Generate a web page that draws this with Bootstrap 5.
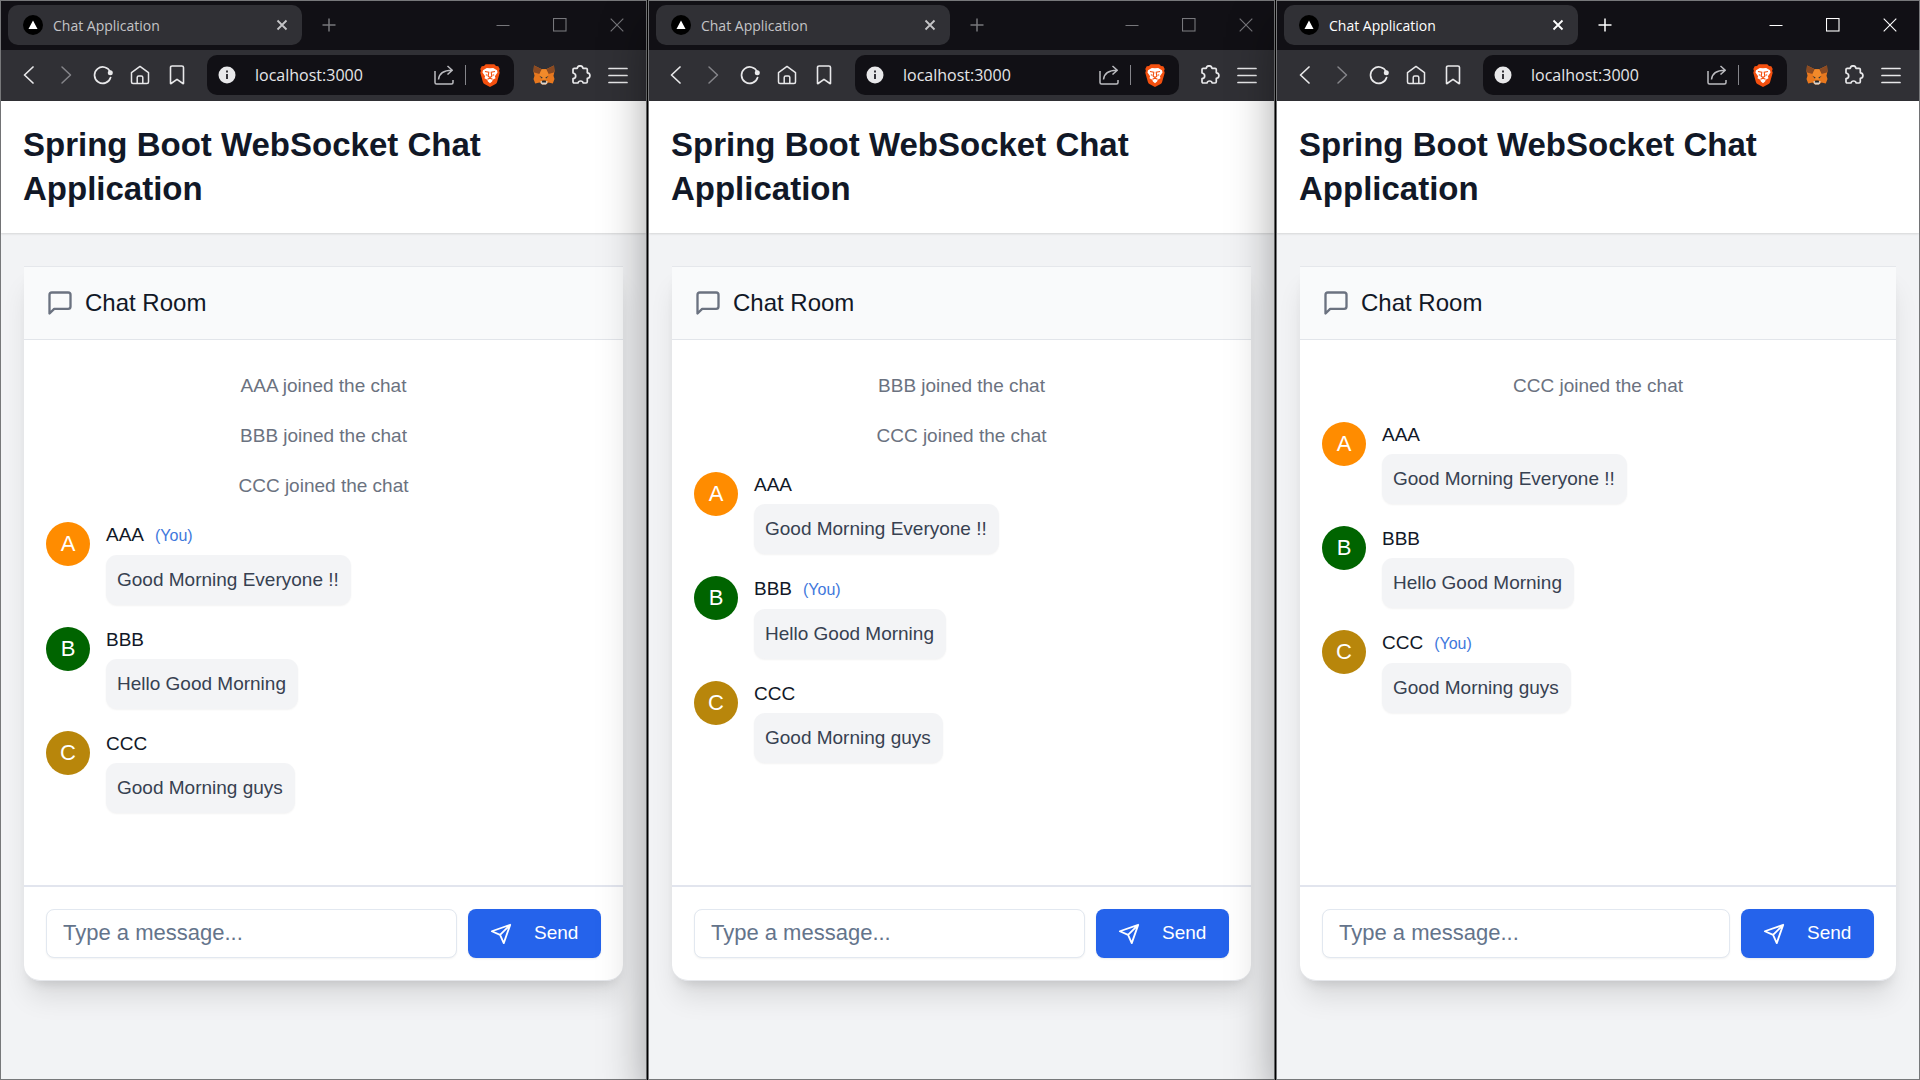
<!DOCTYPE html>
<html lang="en">
<head>
<meta charset="utf-8">
<meta name="viewport" content="width=device-width, initial-scale=1">
<title>Chat Application</title>
<link href="https://cdn.jsdelivr.net/npm/bootstrap@5.3.0/dist/css/bootstrap.min.css" rel="stylesheet">
<style>
  body { background: #000; font-family: "Liberation Sans", Arial, sans-serif; color: #111827; }
  .desk { min-height: 100vh; gap: 1px; }

  /* browser windows */
  .win { flex: 1 1 0; border: 1px solid #77787a; background: #f2f3f5; min-width: 0; box-shadow: 0 22px 44px rgba(0,0,0,.38); }
  .win-a { flex-grow: 647; z-index: 1; }
  .win-b { flex-grow: 627; z-index: 2; }
  .win-c { flex-grow: 644; z-index: 3; }

  .tabstrip { background: #111015; height: 49px; padding-bottom: 1px; color: #77777b; font-family: "Open Sans", "Noto Sans", sans-serif; }
  .win-c .tabstrip { color: #fff; }
  .tab { width: 294px; height: 40px; margin-left: 7px; padding: 0 14px 0 15px; border-radius: 10px; background: #303035; color: #c4c4c7; font-size: 14px; gap: 10px; }
  .win-c .tab { color: #fff; }
  .ctl { width: 57px; height: 48px; }
  .bare { background: none; border: 0; padding: 0; color: inherit; display: inline-flex; align-items: center; justify-content: center; flex: none; }
  .plus { width: 30px; height: 40px; margin-left: 12px; }

  .toolbar { background: #303035; height: 51px; padding: 0 9px 1px; color: #e8e8ea; }
  .tool { width: 37px; height: 40px; }
  .dim { color: #85858a; }
  .urlbox { background: #111015; height: 40px; border-radius: 10px; margin: 0 12px; min-width: 0; padding: 0 14px 0 11px; }
  .urlbox input { background: none; border: 0; outline: 0; color: #e6e6e8; font: 16px/24px "Open Sans", "Noto Sans", sans-serif; padding: 0; min-width: 0; margin-left: 19px; }
  .vline { width: 1px; height: 20px; background: #85858a; margin: 0 14px 0 11px; }

  /* page */
  .hero { background: #fff; padding: 22px; box-shadow: 0 1px 2px rgba(0,0,0,.12); }
  .hero h1 { font-size: 33px; line-height: 44px; font-weight: 700; color: #111827; }
  .stage { padding: 33px 23px 98px; }
  .room { background: #fff; border-radius: 0 0 16px 16px; box-shadow: 0 20px 28px -5px rgba(0,0,0,.11), 0 8px 12px -6px rgba(0,0,0,.12); border: 1px solid #e5e7eb; border-width: 1px 0; }
  .room-head { background: #f9fafb; border-bottom: 1px solid #e2e5ea; padding: 22px; gap: 11px; color: #6b7280; }
  .room-head h2 { font-size: 24px; line-height: 28px; font-weight: 400; color: #111827; }
  .feed { padding: 32px 22px 22px; gap: 22px; font-size: 19px; line-height: 28px; }
  .joined { color: #6b7280; text-align: center; }
  .msg { gap: 16px; }
  .avatar { width: 44px; height: 44px; font-size: 22px; line-height: 44px; color: #fff; text-align: center; flex: none; }
  .av-a { background: #ff8c00; }
  .av-b { background: #006400; }
  .av-c { background: #b8860b; }
  .who { line-height: 26px; margin-bottom: 6px; gap: 11px; }
  .you { font-size: 16px; color: #3f78dc; }
  .bubble { background: #f3f4f6; color: #374151; border-radius: 11px; padding: 11px 12px 11px 11px; box-shadow: 0 1px 2px rgba(0,0,0,.05); }
  .composer { border-top: 2px solid #e2e5ee; padding: 22px; gap: 11px; }
  .composer .form-control { height: 49px; border: 1px solid #e2e8f0; border-radius: 8px; font-size: 22px; line-height: 28px; padding: 0 16px 1px; min-width: 0; box-shadow: 0 1px 2px rgba(0,0,0,.05); }
  .composer .form-control::placeholder { color: #64748b; opacity: 1; }
  .send { min-width: 133px; height: 49px; background: #2563eb; border: 0; border-radius: 8px; padding: 0 22px; gap: 22px; color: #fff; font-size: 19px; box-shadow: 0 1px 2px rgba(0,0,0,.08); }
  .send:hover { background: #1d4ed8; color: #fff; }
</style>
<script src="https://cdn.jsdelivr.net/npm/bootstrap@5.3.0/dist/js/bootstrap.bundle.min.js"></script>
</head>
<body>
<svg class="d-none" xmlns="http://www.w3.org/2000/svg">
  <symbol id="favicon" viewBox="0 0 20 20"><circle cx="10" cy="10" r="10" fill="#000"/><path d="M10 5.5 14.5 14h-9z" fill="#fff"/></symbol>
  <symbol id="x-small" viewBox="0 0 12 12"><path d="M1.5 1.5l9 9M10.500 1.500l-9 9" stroke="currentColor" stroke-width="1.800" fill="none"/></symbol>
  <symbol id="plus" viewBox="0 0 14 14"><path d="M7 .5v13M.5 7h13" stroke="currentColor" stroke-width="1.500" fill="none"/></symbol>
  <symbol id="minimize" viewBox="0 0 14 14"><path d="M.5 7.500h13" stroke="currentColor" fill="none"/></symbol>
  <symbol id="maximize" viewBox="0 0 14 14"><rect x=".5" y=".5" width="12.500" height="12.500" stroke="currentColor" stroke-width="1.100" fill="none"/></symbol>
  <symbol id="close" viewBox="0 0 14 14"><path d="M.7.7l12.600 12.600M13.300.7.7 13.300" stroke="currentColor" stroke-width="1.100" fill="none"/></symbol>
  <symbol id="back" viewBox="0 0 20 20"><path d="M14 2 5.500 10l8.500 8" stroke="currentColor" stroke-width="1.700" fill="none" stroke-linejoin="round" stroke-linecap="round"/></symbol>
  <symbol id="forward" viewBox="0 0 20 20"><path d="M6 2l8.500 8L6 18" stroke="currentColor" stroke-width="1.500" fill="none" stroke-linejoin="round" stroke-linecap="round"/></symbol>
  <symbol id="reload" viewBox="0 0 20 20"><path d="M17.300 7A8.200 8.200 0 1 0 17.600 12.500" stroke="currentColor" stroke-width="1.700" fill="none" stroke-linecap="round"/><circle cx="17.300" cy="7.800" r="2.500" fill="currentColor"/></symbol>
  <symbol id="home" viewBox="0 0 20 20"><path d="M10 1.400 1.500 7.600V17q0 1.500 1.500 1.500h14q1.500 0 1.500-1.500V7.600zM7.200 18.500v-6q0-1.500 1.500-1.500h2.600q1.500 0 1.500 1.500v6" stroke="currentColor" stroke-width="1.500" fill="none" stroke-linejoin="round"/></symbol>
  <symbol id="bookmark" viewBox="0 0 20 20"><path d="M3.500 2.600q0-1.600 1.600-1.600h9.800q1.600 0 1.600 1.600V18.200q0 .6-.6.3L10 14.300l-5.900 4.200q-.6.3-.6-.3z" stroke="currentColor" stroke-width="1.600" fill="none" stroke-linejoin="round"/></symbol>
  <symbol id="info" viewBox="0 0 18 18"><circle cx="9" cy="9" r="8.500" fill="#e8e8ea"/><path d="M9 8v5M9 4.600v1.900" stroke="#222127" stroke-width="1.800"/></symbol>
  <symbol id="share" viewBox="0 0 20 20"><path d="M1 6v11.500q0 1.500 1.500 1.500h15q1.500 0 1.500-1.500V15M4.500 14.500C5 8.500 8.500 5.300 18 5.200M13.500 1 18.300 5.200 13.500 9.500" stroke="#bcbcc0" stroke-width="1.500" fill="none" stroke-linejoin="round"/></symbol>
  <symbol id="brave" viewBox="0 0 20 23"><path d="M5.700.2h8.600l1.700 1.900 2.300.1 1.400 2.700-.6 1.800.6 2-2.600 9.300q-.4 1.300-1.500 2.100L10 23l-5.600-2.900q-1.100-.8-1.500-2.100L.3 8.700l.6-2-.6-1.800 1.400-2.700L4 2.100z" fill="#f4500f"/><path d="M10 4.200 6.800 4 3 6.200l-.5 2.300 2.600 3.700-.6 2 2.800 1.500.6 1.800L10 19.300l2.100-1.800.6-1.800 2.800-1.500-.6-2 2.600-3.700L17 6.200 13.200 4z" fill="#fff"/><path d="M5 7.500l3.800.8-.6 4 1.800 1.200 1.800-1.200-.6-4 3.800-.8M7.500 15.200l2.500-1 2.500 1M5.800 10.800l1.600.5M14.200 10.800l-1.600.5" stroke="#f4500f" stroke-width="1.100" fill="none"/></symbol>
  <symbol id="fox" viewBox="0 0 22 20"><path d="M1 .5 8.800 4.300h4.400L21 .5l.5 5.800-1 4.400 1 3.300-1.700 4.500-4.300-1-2.500 2H9l-2.500-2-4.300 1L.5 14l1-3.300-1-4.400z" fill="#e8781e"/><path d="M1 .5l7.800 3.800L6.500 9 1.200 7.600.8 5.500zM21 .5l-7.800 3.800L15.500 9l5.300-1.400.4-2.100z" fill="#8a4a22"/><path d="M8.800 4.300h4.400L15.500 9l-2.300 5.500H8.800L6.500 9z" fill="#f28a2a"/><path d="M6.500 11l3 1.200-.5 1.500zM15.500 11l-3 1.200.5 1.500z" fill="#2c3438"/><path d="M7.300 16.300h7.400l-.9 2.400-1 .9H9.200l-1-.9z" fill="#d8d4d0"/><path d="M9.300 15.500h3.400l.5 2H8.800z" fill="#20262a"/></symbol>
  <symbol id="puzzle" viewBox="0 0 20 20"><path d="M2 4.500q0-1.200 1.200-1.200h3.100C6.500 0 11.700 0 11.900 3.300h3.200q1.200 0 1.200 1.200v3.300c3.500.2 3.500 5.400 0 5.600v3.400q0 1.200-1.200 1.200h-3c-.2-1.500-1.100-2-2.500-2s-2.300.5-2.500 2H3.200Q2 18 2 16.800V13.700c1.600-.2 2.700-1.200 2.700-2.800S3.600 8.200 2 8z" stroke="currentColor" stroke-width="1.700" fill="none" stroke-linejoin="round"/></symbol>
  <symbol id="menu" viewBox="0 0 20 20"><path d="M1 3.500h18M1 10.500h18M1 17.500h18" stroke="currentColor" stroke-width="1.700" stroke-linecap="round"/></symbol>
  <symbol id="speech" viewBox="0 0 24 24"><path d="M21 15a2 2 0 0 1-2 2H7l-4 4V5a2 2 0 0 1 2-2h14a2 2 0 0 1 2 2z" stroke="currentColor" stroke-width="2" fill="none" stroke-linecap="round" stroke-linejoin="round"/></symbol>
  <symbol id="plane" viewBox="0 0 24 24"><path d="m22 2-7 20-4-9-9-4ZM22 2 11 13" stroke="currentColor" stroke-width="2" fill="none" stroke-linecap="round" stroke-linejoin="round"/></symbol>
</svg>

<div class="desk d-flex align-items-stretch">

  <!-- AAA -->
  <section class="win win-a d-flex flex-column position-relative">
    <div class="tabstrip d-flex align-items-center">
      <div class="tab d-flex align-items-center flex-shrink-0">
        <svg width="20" height="20"><use href="#favicon"/></svg>
        <span class="flex-grow-1">Chat Application</span>
        <button class="bare" type="button" aria-label="Close tab"><svg width="12" height="12"><use href="#x-small"/></svg></button>
      </div>
      <button class="bare plus" type="button" aria-label="New tab"><svg width="14" height="14"><use href="#plus"/></svg></button>
      <button class="bare ctl ms-auto" type="button" aria-label="Minimize"><svg width="14" height="14"><use href="#minimize"/></svg></button>
      <button class="bare ctl" type="button" aria-label="Maximize"><svg width="14" height="14"><use href="#maximize"/></svg></button>
      <button class="bare ctl" type="button" aria-label="Close"><svg width="14" height="14"><use href="#close"/></svg></button>
    </div>
    <div class="toolbar d-flex align-items-center">
      <button class="bare tool" type="button" aria-label="Back"><svg width="20" height="20"><use href="#back"/></svg></button>
      <button class="bare tool dim" type="button" aria-label="Forward"><svg width="20" height="20"><use href="#forward"/></svg></button>
      <button class="bare tool" type="button" aria-label="Reload"><svg width="20" height="20"><use href="#reload"/></svg></button>
      <button class="bare tool" type="button" aria-label="Home"><svg width="20" height="20"><use href="#home"/></svg></button>
      <button class="bare tool" type="button" aria-label="Bookmark"><svg width="20" height="20"><use href="#bookmark"/></svg></button>
      <div class="urlbox d-flex align-items-center flex-grow-1">
        <svg class="flex-shrink-0" width="18" height="18"><use href="#info"/></svg>
        <input class="flex-grow-1" type="text" value="localhost:3000" aria-label="Address">
        <button class="bare" type="button" aria-label="Share"><svg width="20" height="20"><use href="#share"/></svg></button>
        <span class="vline"></span>
        <button class="bare" type="button" aria-label="Shields"><svg width="20" height="23"><use href="#brave"/></svg></button>
      </div>
      <button class="bare tool" type="button" aria-label="Wallet"><svg width="22" height="20"><use href="#fox"/></svg></button>
      <button class="bare tool" type="button" aria-label="Extensions"><svg width="20" height="20"><use href="#puzzle"/></svg></button>
      <button class="bare tool" type="button" aria-label="Menu"><svg width="20" height="20"><use href="#menu"/></svg></button>
    </div>
    <header class="hero"><h1 class="m-0">Spring Boot WebSocket Chat Application</h1></header>
    <main class="stage d-flex flex-column flex-grow-1">
      <div class="room d-flex flex-column flex-grow-1">
        <div class="room-head d-flex align-items-center"><svg width="28" height="28"><use href="#speech"/></svg><h2 class="m-0">Chat Room</h2></div>
        <div class="feed d-flex flex-column flex-grow-1">
          <div class="joined">AAA joined the chat</div>
          <div class="joined">BBB joined the chat</div>
          <div class="joined">CCC joined the chat</div>
          <div class="msg d-flex align-items-start"><div class="avatar av-a rounded-circle">A</div><div><div class="who d-flex align-items-baseline"><span>AAA</span><span class="you">(You)</span></div><div class="bubble">Good Morning Everyone !!</div></div></div>
          <div class="msg d-flex align-items-start"><div class="avatar av-b rounded-circle">B</div><div><div class="who">BBB</div><div class="bubble">Hello Good Morning</div></div></div>
          <div class="msg d-flex align-items-start"><div class="avatar av-c rounded-circle">C</div><div><div class="who">CCC</div><div class="bubble">Good Morning guys</div></div></div>
        </div>
        <form class="composer d-flex">
          <input class="form-control" type="text" placeholder="Type a message..." aria-label="Message">
          <button class="btn send d-flex align-items-center flex-shrink-0" type="button"><svg width="22" height="22"><use href="#plane"/></svg>Send</button>
        </form>
      </div>
    </main>
  </section>

  <!-- BBB -->
  <section class="win win-b d-flex flex-column position-relative">
    <div class="tabstrip d-flex align-items-center">
      <div class="tab d-flex align-items-center flex-shrink-0">
        <svg width="20" height="20"><use href="#favicon"/></svg>
        <span class="flex-grow-1">Chat Application</span>
        <button class="bare" type="button" aria-label="Close tab"><svg width="12" height="12"><use href="#x-small"/></svg></button>
      </div>
      <button class="bare plus" type="button" aria-label="New tab"><svg width="14" height="14"><use href="#plus"/></svg></button>
      <button class="bare ctl ms-auto" type="button" aria-label="Minimize"><svg width="14" height="14"><use href="#minimize"/></svg></button>
      <button class="bare ctl" type="button" aria-label="Maximize"><svg width="14" height="14"><use href="#maximize"/></svg></button>
      <button class="bare ctl" type="button" aria-label="Close"><svg width="14" height="14"><use href="#close"/></svg></button>
    </div>
    <div class="toolbar d-flex align-items-center">
      <button class="bare tool" type="button" aria-label="Back"><svg width="20" height="20"><use href="#back"/></svg></button>
      <button class="bare tool dim" type="button" aria-label="Forward"><svg width="20" height="20"><use href="#forward"/></svg></button>
      <button class="bare tool" type="button" aria-label="Reload"><svg width="20" height="20"><use href="#reload"/></svg></button>
      <button class="bare tool" type="button" aria-label="Home"><svg width="20" height="20"><use href="#home"/></svg></button>
      <button class="bare tool" type="button" aria-label="Bookmark"><svg width="20" height="20"><use href="#bookmark"/></svg></button>
      <div class="urlbox d-flex align-items-center flex-grow-1">
        <svg class="flex-shrink-0" width="18" height="18"><use href="#info"/></svg>
        <input class="flex-grow-1" type="text" value="localhost:3000" aria-label="Address">
        <button class="bare" type="button" aria-label="Share"><svg width="20" height="20"><use href="#share"/></svg></button>
        <span class="vline"></span>
        <button class="bare" type="button" aria-label="Shields"><svg width="20" height="23"><use href="#brave"/></svg></button>
      </div>
      <button class="bare tool" type="button" aria-label="Extensions"><svg width="20" height="20"><use href="#puzzle"/></svg></button>
      <button class="bare tool" type="button" aria-label="Menu"><svg width="20" height="20"><use href="#menu"/></svg></button>
    </div>
    <header class="hero"><h1 class="m-0">Spring Boot WebSocket Chat Application</h1></header>
    <main class="stage d-flex flex-column flex-grow-1">
      <div class="room d-flex flex-column flex-grow-1">
        <div class="room-head d-flex align-items-center"><svg width="28" height="28"><use href="#speech"/></svg><h2 class="m-0">Chat Room</h2></div>
        <div class="feed d-flex flex-column flex-grow-1">
          <div class="joined">BBB joined the chat</div>
          <div class="joined">CCC joined the chat</div>
          <div class="msg d-flex align-items-start"><div class="avatar av-a rounded-circle">A</div><div><div class="who">AAA</div><div class="bubble">Good Morning Everyone !!</div></div></div>
          <div class="msg d-flex align-items-start"><div class="avatar av-b rounded-circle">B</div><div><div class="who d-flex align-items-baseline"><span>BBB</span><span class="you">(You)</span></div><div class="bubble">Hello Good Morning</div></div></div>
          <div class="msg d-flex align-items-start"><div class="avatar av-c rounded-circle">C</div><div><div class="who">CCC</div><div class="bubble">Good Morning guys</div></div></div>
        </div>
        <form class="composer d-flex">
          <input class="form-control" type="text" placeholder="Type a message..." aria-label="Message">
          <button class="btn send d-flex align-items-center flex-shrink-0" type="button"><svg width="22" height="22"><use href="#plane"/></svg>Send</button>
        </form>
      </div>
    </main>
  </section>

  <!-- CCC -->
  <section class="win win-c d-flex flex-column position-relative">
    <div class="tabstrip d-flex align-items-center">
      <div class="tab d-flex align-items-center flex-shrink-0">
        <svg width="20" height="20"><use href="#favicon"/></svg>
        <span class="flex-grow-1">Chat Application</span>
        <button class="bare" type="button" aria-label="Close tab"><svg width="12" height="12"><use href="#x-small"/></svg></button>
      </div>
      <button class="bare plus" type="button" aria-label="New tab"><svg width="14" height="14"><use href="#plus"/></svg></button>
      <button class="bare ctl ms-auto" type="button" aria-label="Minimize"><svg width="14" height="14"><use href="#minimize"/></svg></button>
      <button class="bare ctl" type="button" aria-label="Maximize"><svg width="14" height="14"><use href="#maximize"/></svg></button>
      <button class="bare ctl" type="button" aria-label="Close"><svg width="14" height="14"><use href="#close"/></svg></button>
    </div>
    <div class="toolbar d-flex align-items-center">
      <button class="bare tool" type="button" aria-label="Back"><svg width="20" height="20"><use href="#back"/></svg></button>
      <button class="bare tool dim" type="button" aria-label="Forward"><svg width="20" height="20"><use href="#forward"/></svg></button>
      <button class="bare tool" type="button" aria-label="Reload"><svg width="20" height="20"><use href="#reload"/></svg></button>
      <button class="bare tool" type="button" aria-label="Home"><svg width="20" height="20"><use href="#home"/></svg></button>
      <button class="bare tool" type="button" aria-label="Bookmark"><svg width="20" height="20"><use href="#bookmark"/></svg></button>
      <div class="urlbox d-flex align-items-center flex-grow-1">
        <svg class="flex-shrink-0" width="18" height="18"><use href="#info"/></svg>
        <input class="flex-grow-1" type="text" value="localhost:3000" aria-label="Address">
        <button class="bare" type="button" aria-label="Share"><svg width="20" height="20"><use href="#share"/></svg></button>
        <span class="vline"></span>
        <button class="bare" type="button" aria-label="Shields"><svg width="20" height="23"><use href="#brave"/></svg></button>
      </div>
      <button class="bare tool" type="button" aria-label="Wallet"><svg width="22" height="20"><use href="#fox"/></svg></button>
      <button class="bare tool" type="button" aria-label="Extensions"><svg width="20" height="20"><use href="#puzzle"/></svg></button>
      <button class="bare tool" type="button" aria-label="Menu"><svg width="20" height="20"><use href="#menu"/></svg></button>
    </div>
    <header class="hero"><h1 class="m-0">Spring Boot WebSocket Chat Application</h1></header>
    <main class="stage d-flex flex-column flex-grow-1">
      <div class="room d-flex flex-column flex-grow-1">
        <div class="room-head d-flex align-items-center"><svg width="28" height="28"><use href="#speech"/></svg><h2 class="m-0">Chat Room</h2></div>
        <div class="feed d-flex flex-column flex-grow-1">
          <div class="joined">CCC joined the chat</div>
          <div class="msg d-flex align-items-start"><div class="avatar av-a rounded-circle">A</div><div><div class="who">AAA</div><div class="bubble">Good Morning Everyone !!</div></div></div>
          <div class="msg d-flex align-items-start"><div class="avatar av-b rounded-circle">B</div><div><div class="who">BBB</div><div class="bubble">Hello Good Morning</div></div></div>
          <div class="msg d-flex align-items-start"><div class="avatar av-c rounded-circle">C</div><div><div class="who d-flex align-items-baseline"><span>CCC</span><span class="you">(You)</span></div><div class="bubble">Good Morning guys</div></div></div>
        </div>
        <form class="composer d-flex">
          <input class="form-control" type="text" placeholder="Type a message..." aria-label="Message">
          <button class="btn send d-flex align-items-center flex-shrink-0" type="button"><svg width="22" height="22"><use href="#plane"/></svg>Send</button>
        </form>
      </div>
    </main>
  </section>
</div>
</body>
</html>
